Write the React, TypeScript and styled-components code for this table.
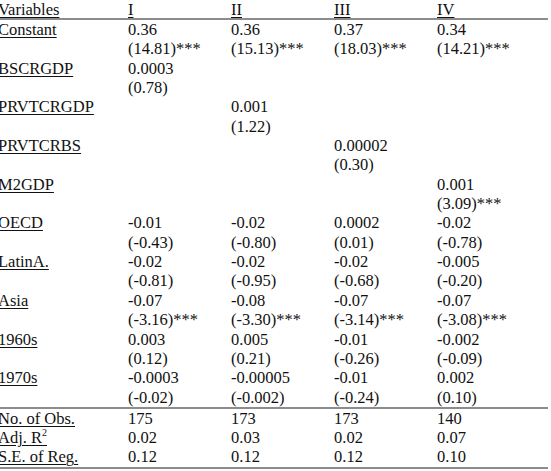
import React from 'react';
import styled, { createGlobalStyle } from 'styled-components';

interface Estimate {
  name: string;
  coef: string[];
  tstat: string[];
}

const GlobalStyle = createGlobalStyle`
  html, body {
    margin: 0;
    padding: 0;
    background: #fff;
  }
  body {
    width: 551px;
    height: 471px;
    overflow: hidden;
  }
`;

const Table = styled.table`
  border-collapse: collapse;
  table-layout: fixed;
  width: 550px;
  margin-left: -2px;
  font-family: 'Liberation Serif', 'Times New Roman', serif;
  font-size: 16.5px;
  color: #111;
`;

const HeadCell = styled.th`
  text-align: left;
  font-weight: normal;
  padding: 1px 0 0;
  height: 17px;
  line-height: 17px;
  vertical-align: top;
  border-bottom: 2px solid #8c8c8c;
`;

const Row = styled.tr<{ $ruleTop?: boolean; $ruleBottom?: boolean }>`
  border-top: ${p => (p.$ruleTop ? '2px solid #8c8c8c' : 'none')};
  border-bottom: ${p => (p.$ruleBottom ? '2px solid #8c8c8c' : 'none')};
`;

const Cell = styled.td<{ $tight?: boolean }>`
  padding: 0;
  height: ${p => (p.$tight ? '19.3px' : '19.35px')};
  line-height: ${p => (p.$tight ? '19.3px' : '19.35px')};
  white-space: nowrap;
  vertical-align: middle;
`;

const Label = styled.span`
  text-decoration: underline;
  text-underline-offset: 2px;
`;

const Sup = styled.sup`
  font-size: 10px;
  line-height: 0;
  vertical-align: 7px;
`;

const estimates: Estimate[] = [
  { name: 'Constant', coef: ['0.36', '0.36', '0.37', '0.34'], tstat: ['(14.81)***', '(15.13)***', '(18.03)***', '(14.21)***'] },
  { name: 'BSCRGDP', coef: ['0.0003', '', '', ''], tstat: ['(0.78)', '', '', ''] },
  { name: 'PRVTCRGDP', coef: ['', '0.001', '', ''], tstat: ['', '(1.22)', '', ''] },
  { name: 'PRVTCRBS', coef: ['', '', '0.00002', ''], tstat: ['', '', '(0.30)', ''] },
  { name: 'M2GDP', coef: ['', '', '', '0.001'], tstat: ['', '', '', '(3.09)***'] },
  { name: 'OECD', coef: ['-0.01', '-0.02', '0.0002', '-0.02'], tstat: ['(-0.43)', '(-0.80)', '(0.01)', '(-0.78)'] },
  { name: 'LatinA.', coef: ['-0.02', '-0.02', '-0.02', '-0.005'], tstat: ['(-0.81)', '(-0.95)', '(-0.68)', '(-0.20)'] },
  { name: 'Asia', coef: ['-0.07', '-0.08', '-0.07', '-0.07'], tstat: ['(-3.16)***', '(-3.30)***', '(-3.14)***', '(-3.08)***'] },
  { name: '1960s', coef: ['0.003', '0.005', '-0.01', '-0.002'], tstat: ['(0.12)', '(0.21)', '(-0.26)', '(-0.09)'] },
  { name: '1970s', coef: ['-0.0003', '-0.00005', '-0.01', '0.002'], tstat: ['(-0.02)', '(-0.002)', '(-0.24)', '(0.10)'] },
];

const summary = [
  { label: <>No. of Obs.</>, values: ['175', '173', '173', '140'] },
  { label: <>Adj. R<Sup>2</Sup></>, values: ['0.02', '0.03', '0.02', '0.07'] },
  { label: <>S.E. of Reg.</>, values: ['0.12', '0.12', '0.12', '0.10'] },
];

const App: React.FC = () => {
  return (
    <>
      <GlobalStyle />
      <Table>
        <colgroup>
          <col style={{ width: 130 }} />
          <col style={{ width: 103 }} />
          <col style={{ width: 103 }} />
          <col style={{ width: 103 }} />
          <col style={{ width: 111 }} />
        </colgroup>
        <thead>
          <tr>
            {['Variables', 'I', 'II', 'III', 'IV'].map(h => (
              <HeadCell key={h}><Label>{h}</Label></HeadCell>
            ))}
          </tr>
        </thead>
        <tbody>
          {estimates.map(est => (
            <React.Fragment key={est.name}>
              <Row>
                <Cell><Label>{est.name}</Label></Cell>
                {est.coef.map((c, i) => <Cell key={i}>{c}</Cell>)}
              </Row>
              <Row>
                <Cell />
                {est.tstat.map((t, i) => <Cell key={i}>{t}</Cell>)}
              </Row>
            </React.Fragment>
          ))}
          {summary.map((s, idx) => (
            <Row key={idx} $ruleTop={idx === 0} $ruleBottom={idx === summary.length - 1}>
              <Cell $tight><Label>{s.label}</Label></Cell>
              {s.values.map((v, i) => <Cell $tight key={i}>{v}</Cell>)}
            </Row>
          ))}
        </tbody>
      </Table>
    </>
  );
};

export default App;
